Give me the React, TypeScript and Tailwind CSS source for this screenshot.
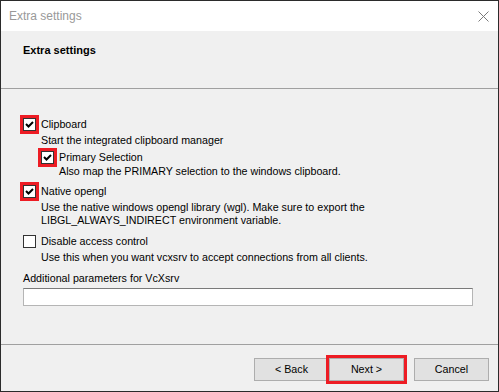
import React from "react"

const font = { fontFamily: '"Liberation Sans", Arial, sans-serif' }

function CheckBox({ checked, marked }: { checked?: boolean; marked?: boolean }) {
  return (
    <span className="relative inline-block w-[13px] h-[13px] shrink-0 bg-white border border-[#333333]">
      {checked && (
        <svg width="11" height="11" viewBox="0 0 11 11" className="absolute left-0 top-0">
          <polyline points="2,5 4.5,7.5 9,3" fill="none" stroke="#000" strokeWidth="2" />
        </svg>
      )}
      {marked && <span className="absolute -inset-[4px] border-[3px] border-[#ed1c24]" />}
    </span>
  )
}

function Option({
  label,
  checked,
  marked,
  className,
}: {
  label: string
  checked?: boolean
  marked?: boolean
  className?: string
}) {
  return (
    <div className={"flex items-center h-[13px] gap-[5px] " + (className ?? "")}>
      <CheckBox checked={checked} marked={marked} />
      <span className="leading-[13px]">{label}</span>
    </div>
  )
}

export default function App() {
  return (
    <div
      className="w-[499px] h-[392px] flex flex-col border-x border-t border-b border-[#2b2b2b] bg-[#f0f0f0] text-[10.7px] text-black overflow-hidden"
      style={font}
    >
      {/* title bar */}
      <div className="h-[30px] shrink-0 bg-white flex items-center justify-between pl-[8px] pr-[9px]">
        <span className="text-[12px] text-[#999999]">Extra settings</span>
        <svg width="11" height="11" viewBox="0 0 11 11">
          <path d="M0.5 0.5 L10.5 10.5 M10.5 0.5 L0.5 10.5" stroke="#7a7a7a" strokeWidth="1" />
        </svg>
      </div>

      {/* header */}
      <div className="h-[58px] shrink-0 border-b border-[#a0a0a0] pl-[22px] pt-[11px]">
        <span className="font-bold text-[11px]">Extra settings</span>
      </div>

      {/* body */}
      <div className="flex-1 flex flex-col pl-[22px] pr-[25px] pt-[29px] leading-[13px]">
        <Option label="Clipboard" checked marked />
        <div className="mt-[3px] pl-[18px]">Start the integrated clipboard manager</div>
        <Option label="Primary Selection" checked marked className="mt-[4px] pl-[18px]" />
        <div className="mt-[1px] pl-[36px]">Also map the PRIMARY selection to the windows clipboard.</div>
        <Option label="Native opengl" checked marked className="mt-[7px]" />
        <div className="mt-[3px] pl-[18px]">
          Use the native windows opengl library (wgl). Make sure to export the
          <br />
          LIBGL_ALWAYS_INDIRECT environment variable.
        </div>
        <Option label="Disable access control" className="mt-[8px]" />
        <div className="mt-[3px] pl-[18px]">Use this when you want vcxsrv to accept connections from all clients.</div>
        <div className="mt-[8px]">Additional parameters for VcXsrv</div>
        <div className="mt-[3px] h-[18px] bg-white border border-[#b5b5b5] border-t-[#7a7a7a]" />
      </div>

      {/* footer */}
      <div className="h-[47px] shrink-0 border-t border-[#a0a0a0] flex justify-end items-start pt-[13px] pr-[9px]">
        <button className="w-[75px] h-[23px] bg-[#e1e1e1] border border-[#adadad]">&lt; Back</button>
        <div className="relative">
          <button className="w-[75px] h-[23px] bg-[#e1e1e1] border border-[#adadad]">Next &gt;</button>
          <span className="absolute -inset-[3px] border-[3px] border-[#ed1c24]" />
        </div>
        <button className="ml-[10px] w-[75px] h-[23px] bg-[#e1e1e1] border border-[#adadad]">Cancel</button>
      </div>
    </div>
  )
}
